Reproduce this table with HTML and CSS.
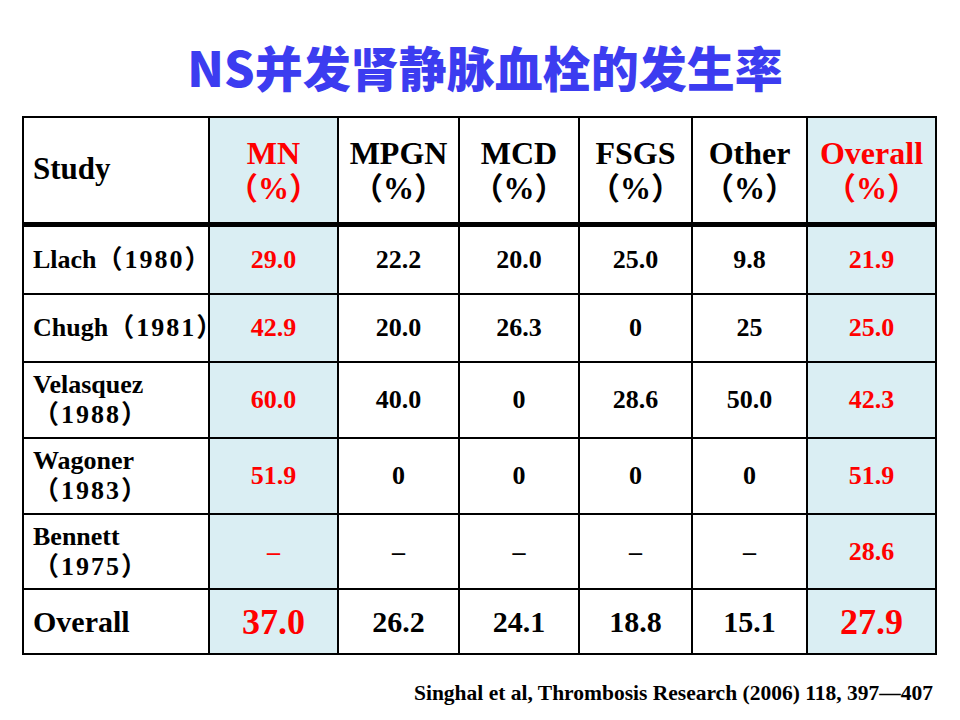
FILE: index.html
```html
<!DOCTYPE html>
<html lang="zh">
<head>
<meta charset="utf-8">
<title>NS并发肾静脉血栓的发生率</title>
<link rel="stylesheet" href="styles.css">
</head>
<body>
<div class="slide">
  <h1 class="title">NS并发肾静脉血栓的发生率</h1>
  <table class="grid">
    <colgroup>
      <col class="c-study"><col class="c-mn"><col class="c-mpgn"><col class="c-mcd"><col class="c-fsgs"><col class="c-other"><col class="c-all">
    </colgroup>
    <thead>
      <tr class="r-head">
        <th class="lab"><span class="h-study">Study</span></th>
        <th class="hl red"><div class="h-top">MN</div><div class="h-pct">（%）</div></th>
        <th><div class="h-top">MPGN</div><div class="h-pct">（%）</div></th>
        <th><div class="h-top">MCD</div><div class="h-pct">（%）</div></th>
        <th><div class="h-top">FSGS</div><div class="h-pct">（%）</div></th>
        <th><div class="h-top">Other</div><div class="h-pct">（%）</div></th>
        <th class="hl red"><div class="h-top">Overall</div><div class="h-pct">（%）</div></th>
      </tr>
    </thead>
    <tbody>
      <tr class="r1">
        <td class="lab">Llach<span class="yr">（1980）</span></td>
        <td class="hl red">29.0</td><td>22.2</td><td>20.0</td><td>25.0</td><td>9.8</td><td class="hl red">21.9</td>
      </tr>
      <tr class="r2">
        <td class="lab">Chugh<span class="yr">（1981）</span></td>
        <td class="hl red">42.9</td><td>20.0</td><td>26.3</td><td>0</td><td>25</td><td class="hl red">25.0</td>
      </tr>
      <tr class="r3">
        <td class="lab two">Velasquez<br><span class="yr">（1988）</span></td>
        <td class="hl red">60.0</td><td>40.0</td><td>0</td><td>28.6</td><td>50.0</td><td class="hl red">42.3</td>
      </tr>
      <tr class="r4">
        <td class="lab two">Wagoner<br><span class="yr">（1983）</span></td>
        <td class="hl red">51.9</td><td>0</td><td>0</td><td>0</td><td>0</td><td class="hl red">51.9</td>
      </tr>
      <tr class="r5">
        <td class="lab two">Bennett<br><span class="yr">（1975）</span></td>
        <td class="hl red">–</td><td>–</td><td>–</td><td>–</td><td>–</td><td class="hl red">28.6</td>
      </tr>
      <tr class="r6 total">
        <td class="lab">Overall</td>
        <td class="hl red big">37.0</td><td>26.2</td><td>24.1</td><td>18.8</td><td>15.1</td><td class="hl red big">27.9</td>
      </tr>
    </tbody>
  </table>
  <p class="cite">Singhal et al, Thrombosis Research (2006) 118, 397—407</p>
</div>
</body>
</html>
```

FILE: styles.css
```css
html, body {
  margin: 0;
  padding: 0;
  background: #ffffff;
}

body {
  font-family: "Liberation Serif", "Noto Sans CJK SC", serif;
  color: #000;
}

.slide {
  width: 960px;
  height: 720px;
  overflow: hidden;
}

.title {
  box-sizing: border-box;
  height: 116px;
  margin: 0;
  padding: 42px 0 0 10px;
  text-align: center;
  font-family: "Noto Sans CJK SC", "Noto Sans", sans-serif;
  font-size: 48px;
  line-height: 48px;
  font-weight: 900;
  color: #3c3cf0;
}

.grid {
  margin-left: 22px;
  width: 913px;
  border-collapse: collapse;
  table-layout: fixed;
}

.c-study { width: 186px; }
.c-mn { width: 129px; }
.c-mpgn { width: 121px; }
.c-mcd { width: 120px; }
.c-fsgs { width: 113px; }
.c-other { width: 115px; }
.c-all { width: 129px; }

.grid th,
.grid td {
  border: 2px solid #000;
  padding: 0;
  text-align: center;
  vertical-align: middle;
  font-weight: 700;
  font-size: 26px;
  line-height: 30px;
}

.grid thead th {
  border-bottom: 5px solid #000;
}

.r-head { height: 107px; }
.r1 { height: 70px; }
.r2 { height: 68px; }
.r3 { height: 76px; }
.r4 { height: 76px; }
.r5 { height: 75px; }
.r6 { height: 65px; }

.h-top {
  font-size: 32px;
  line-height: 36px;
  padding-top: 2px;
}

.h-pct {
  font-size: 31px;
  line-height: 36px;
}

.h-study {
  font-size: 31px;
}

.grid .lab {
  text-align: left;
  padding-left: 9px;
  white-space: nowrap;
}

.yr {
  letter-spacing: 2px;
}

.grid .two {
  line-height: 30px;
}

.hl {
  background: #daeef3;
}

.red {
  color: #ff0000;
}

.total td {
  font-size: 30px;
}

.total td.big {
  font-size: 36px;
}

.cite {
  margin: 27px 0 0;
  padding-right: 27px;
  text-align: right;
  font-size: 21.5px;
  line-height: 22px;
  font-weight: 700;
}
```
